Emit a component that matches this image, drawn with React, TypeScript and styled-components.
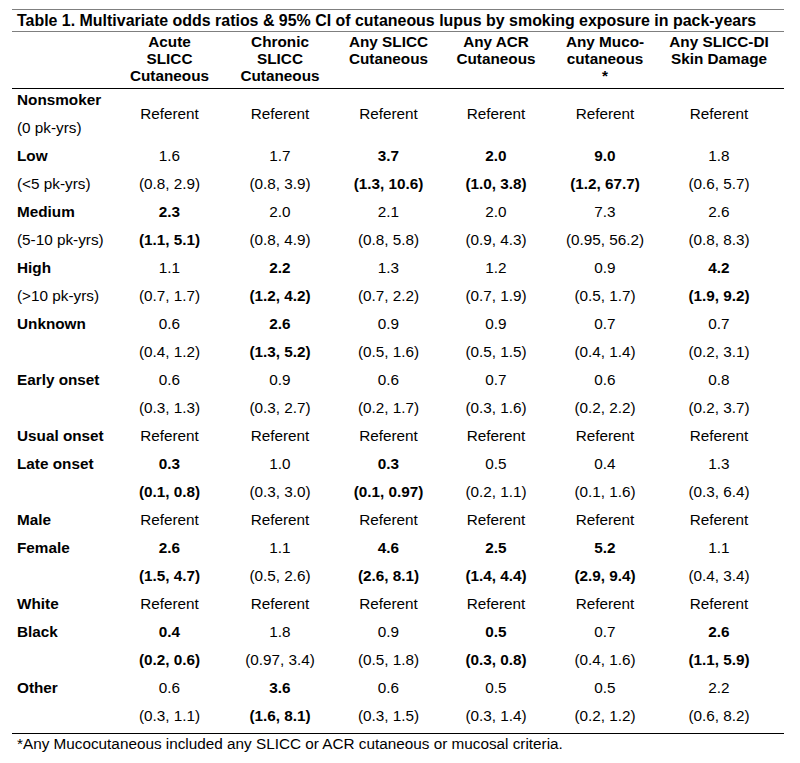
import React from 'react'
import styled, { createGlobalStyle } from 'styled-components'

const GlobalStyle = createGlobalStyle`
  body {
    margin: 0;
    background: #fff;
    color: #000;
    font-family: 'Liberation Sans', Arial, sans-serif;
  }
`

const COLS = '102px 111px 110px 107px 108px 110px 118px'

const Wrapper = styled.div`
  width: 772px;
  margin-left: 12px;
  padding-top: 9px;
  font-size: 15.3px;
`

const Title = styled.div`
  border-top: 1px solid #7f7f7f;
  border-bottom: 1px solid #7f7f7f;
  line-height: 21px;
  padding-left: 5px;
  font-size: 15.95px;
  font-weight: bold;
  white-space: nowrap;
`

const HeaderRow = styled.div`
  display: grid;
  grid-template-columns: ${COLS};
  padding: 1px 0 4px;
  border-bottom: 1px solid #000;
`

const HeadCell = styled.div`
  text-align: center;
  font-weight: bold;
  line-height: 17px;
`

const Body = styled.div`
  border-bottom: 1px solid #000;
`

const Group = styled.div`
  display: grid;
  grid-template-columns: ${COLS};
`

const LabelCell = styled.div`
  padding-left: 5px;
`

const ValueCell = styled.div`
  text-align: center;
`

const Line = styled.div<{ $bold?: boolean; $tall?: boolean }>`
  height: ${p => (p.$tall ? 56 : 28)}px;
  line-height: ${p => (p.$tall ? 50 : 22)}px;
  white-space: nowrap;
  font-weight: ${p => (p.$bold ? 'bold' : 'normal')};
`

const Footnote = styled.div`
  line-height: 20px;
  padding-left: 5px;
`

type Est = [string, string, boolean] | 'ref'

type Row = {
  label: string
  sub?: string
  values: Est[]
}

const REF: Est[] = ['ref', 'ref', 'ref', 'ref', 'ref', 'ref']

const rows: Row[] = [
  { label: 'Nonsmoker', sub: '(0 pk-yrs)', values: REF },
  {
    label: 'Low',
    sub: '(<5 pk-yrs)',
    values: [
      ['1.6', '(0.8, 2.9)', false],
      ['1.7', '(0.8, 3.9)', false],
      ['3.7', '(1.3, 10.6)', true],
      ['2.0', '(1.0, 3.8)', true],
      ['9.0', '(1.2, 67.7)', true],
      ['1.8', '(0.6, 5.7)', false],
    ],
  },
  {
    label: 'Medium',
    sub: '(5-10 pk-yrs)',
    values: [
      ['2.3', '(1.1, 5.1)', true],
      ['2.0', '(0.8, 4.9)', false],
      ['2.1', '(0.8, 5.8)', false],
      ['2.0', '(0.9, 4.3)', false],
      ['7.3', '(0.95, 56.2)', false],
      ['2.6', '(0.8, 8.3)', false],
    ],
  },
  {
    label: 'High',
    sub: '(>10 pk-yrs)',
    values: [
      ['1.1', '(0.7, 1.7)', false],
      ['2.2', '(1.2, 4.2)', true],
      ['1.3', '(0.7, 2.2)', false],
      ['1.2', '(0.7, 1.9)', false],
      ['0.9', '(0.5, 1.7)', false],
      ['4.2', '(1.9, 9.2)', true],
    ],
  },
  {
    label: 'Unknown',
    values: [
      ['0.6', '(0.4, 1.2)', false],
      ['2.6', '(1.3, 5.2)', true],
      ['0.9', '(0.5, 1.6)', false],
      ['0.9', '(0.5, 1.5)', false],
      ['0.7', '(0.4, 1.4)', false],
      ['0.7', '(0.2, 3.1)', false],
    ],
  },
  {
    label: 'Early onset',
    values: [
      ['0.6', '(0.3, 1.3)', false],
      ['0.9', '(0.3, 2.7)', false],
      ['0.6', '(0.2, 1.7)', false],
      ['0.7', '(0.3, 1.6)', false],
      ['0.6', '(0.2, 2.2)', false],
      ['0.8', '(0.2, 3.7)', false],
    ],
  },
  { label: 'Usual onset', values: REF },
  {
    label: 'Late onset',
    values: [
      ['0.3', '(0.1, 0.8)', true],
      ['1.0', '(0.3, 3.0)', false],
      ['0.3', '(0.1, 0.97)', true],
      ['0.5', '(0.2, 1.1)', false],
      ['0.4', '(0.1, 1.6)', false],
      ['1.3', '(0.3, 6.4)', false],
    ],
  },
  { label: 'Male', values: REF },
  {
    label: 'Female',
    values: [
      ['2.6', '(1.5, 4.7)', true],
      ['1.1', '(0.5, 2.6)', false],
      ['4.6', '(2.6, 8.1)', true],
      ['2.5', '(1.4, 4.4)', true],
      ['5.2', '(2.9, 9.4)', true],
      ['1.1', '(0.4, 3.4)', false],
    ],
  },
  { label: 'White', values: REF },
  {
    label: 'Black',
    values: [
      ['0.4', '(0.2, 0.6)', true],
      ['1.8', '(0.97, 3.4)', false],
      ['0.9', '(0.5, 1.8)', false],
      ['0.5', '(0.3, 0.8)', true],
      ['0.7', '(0.4, 1.6)', false],
      ['2.6', '(1.1, 5.9)', true],
    ],
  },
  {
    label: 'Other',
    values: [
      ['0.6', '(0.3, 1.1)', false],
      ['3.6', '(1.6, 8.1)', true],
      ['0.6', '(0.3, 1.5)', false],
      ['0.5', '(0.3, 1.4)', false],
      ['0.5', '(0.2, 1.2)', false],
      ['2.2', '(0.6, 8.2)', false],
    ],
  },
]

const headers: string[][] = [
  ['Acute', 'SLICC', 'Cutaneous'],
  ['Chronic', 'SLICC', 'Cutaneous'],
  ['Any SLICC', 'Cutaneous'],
  ['Any ACR', 'Cutaneous'],
  ['Any Muco-', 'cutaneous', '*'],
  ['Any SLICC-DI', 'Skin Damage'],
]

const App: React.FC = () => {
  return (
    <>
      <GlobalStyle />
      <Wrapper>
        <Title>
          Table 1. Multivariate odds ratios &amp; 95% CI of cutaneous lupus by smoking exposure in pack-years
        </Title>
        <HeaderRow>
          <div />
          {headers.map((h, i) => (
            <HeadCell key={i}>
              {h.map((l, j) => (
                <div key={j}>{l}</div>
              ))}
            </HeadCell>
          ))}
        </HeaderRow>
        <Body>
          {rows.map(r => (
            <Group key={r.label}>
              <LabelCell>
                <Line $bold>{r.label}</Line>
                {r.sub && <Line>{r.sub}</Line>}
              </LabelCell>
              {r.values.map((v, i) => (
                <ValueCell key={i}>
                  {v === 'ref' ? (
                    <Line $tall={!!r.sub}>Referent</Line>
                  ) : (
                    <>
                      <Line $bold={v[2]}>{v[0]}</Line>
                      <Line $bold={v[2]}>{v[1]}</Line>
                    </>
                  )}
                </ValueCell>
              ))}
            </Group>
          ))}
        </Body>
        <Footnote>*Any Mucocutaneous included any SLICC or ACR cutaneous or mucosal criteria.</Footnote>
      </Wrapper>
    </>
  )
}

export default App
